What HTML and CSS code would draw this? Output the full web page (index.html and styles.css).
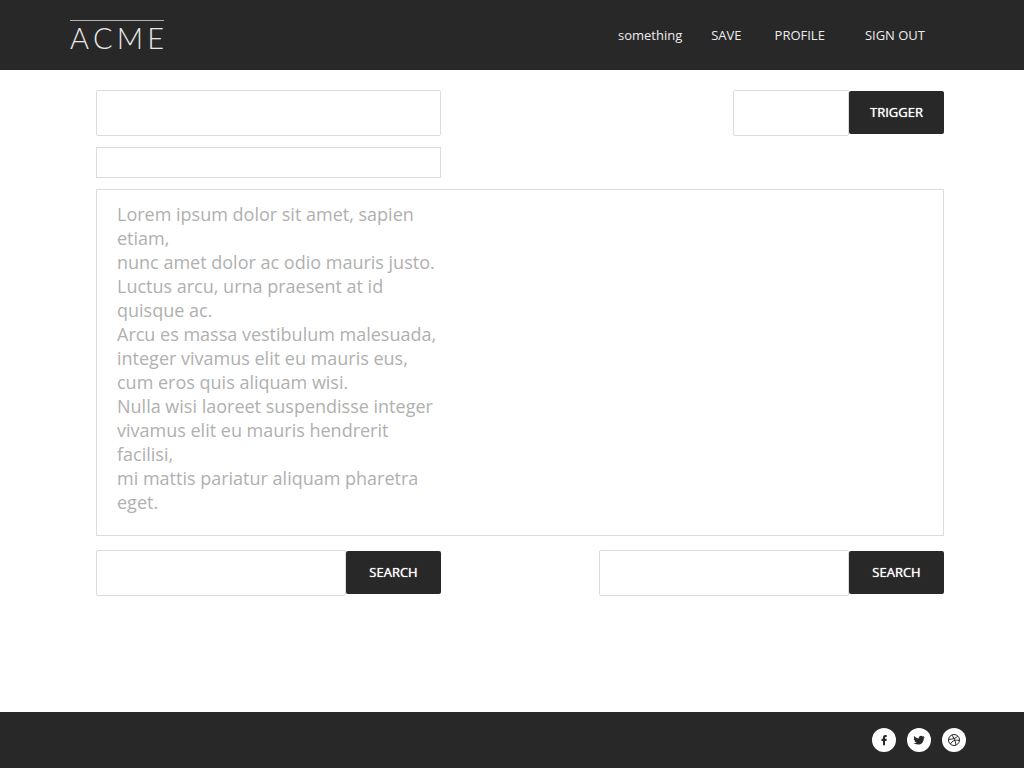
FILE: index.html
```html
<!DOCTYPE html>
<html lang="en">
<head>
<meta charset="utf-8">
<meta name="viewport" content="width=device-width, initial-scale=1">
<title>Acme</title>
<link rel="stylesheet" href="styles.css">
</head>
<body>
<header class="header">
  <a class="logo" href="#" aria-label="ACME"><span>A</span><span>C</span><span>M</span><span>E</span></a>
  <nav class="nav">
    <a class="nav-user" href="#">something</a>
    <a class="nav-save" href="#">SAVE</a>
    <a class="nav-profile" href="#">PROFILE</a>
    <a href="#">SIGN OUT</a>
  </nav>
</header>
<main class="main">
  <div class="row">
    <input class="field column" type="text" aria-label="Title">
    <form class="group group-small">
      <input class="field" type="text" aria-label="Trigger value">
      <button class="button" type="button">TRIGGER</button>
    </form>
  </div>
  <input class="field field-slim column" type="text" aria-label="Subtitle">
  <div class="editor">
    <textarea class="editor-text" rows="13" aria-label="Text" spellcheck="false">Lorem ipsum dolor sit amet, sapien etiam,
nunc amet dolor ac odio mauris justo.
Luctus arcu, urna praesent at id quisque ac.
Arcu es massa vestibulum malesuada,
integer vivamus elit eu mauris eus,
cum eros quis aliquam wisi.
Nulla wisi laoreet suspendisse integer
vivamus elit eu mauris hendrerit facilisi,
mi mattis pariatur aliquam pharetra eget.</textarea>
  </div>
  <div class="row">
    <form class="group column">
      <input class="field" type="text" aria-label="First search">
      <button class="button" type="button">SEARCH</button>
    </form>
    <form class="group column">
      <input class="field" type="text" aria-label="Second search">
      <button class="button" type="button">SEARCH</button>
    </form>
  </div>
</main>
<footer class="footer">
  <a class="social" href="#" aria-label="Facebook">
    <svg viewBox="0 0 24 24"><path d="M11 17.200v-4.300H9.500v-2.100H11V9.600c0-1.900.9-2.600 2.300-2.600h1.400v2.100h-.9c-.6 0-.8.200-.8.700v1h1.700l-.2 2.100H13v4.300z"/></svg>
  </a>
  <a class="social" href="#" aria-label="Twitter">
    <svg viewBox="0 0 24 24"><path d="M7.300 8c1.200 1.400 2.600 2.300 4.400 2.500.1-1.700.9-2.700 2.400-2.800.7 0 1.200.3 1.600.7l1.300-.4-.5 1.200 1.500.2-1.300 1c.1 3.700-2.500 6.100-5.600 6.100-1.800 0-3.500-.5-4.600-1.400 1.400 0 2.400-.2 3.100-.8-1-.1-1.600-.6-2-1.400h.8c-1.100-.4-1.600-1.100-1.600-2.100l.7.100C6.700 10.200 6.700 9 7.300 8z"/></svg>
  </a>
  <a class="social social-line" href="#" aria-label="Dribbble">
    <svg viewBox="0 0 24 24"><circle cx="12" cy="12" r="5.500"/><path d="M9.800 7c2 2.500 3.500 5.600 4.200 10M6.500 11.300c4 0 7.300-.8 9.200-3.200M8.400 16.100c1.900-3.500 5.100-4.700 9.100-3.600"/></svg>
  </a>
</footer>
</body>
</html>
```
FILE: styles.css
```css
* {
  box-sizing: border-box;
}

body {
  display: flex;
  flex-direction: column;
  min-height: 100vh;
  margin: 0;
  background: #fff;
  color: #282828;
  font-family: "Open Sans", sans-serif;
  font-size: 13px;
}

.header {
  display: flex;
  justify-content: space-between;
  align-items: flex-start;
  height: 70px;
  padding: 20px 99px 0 70px;
  background: #282828;
}

.logo {
  display: flex;
  justify-content: space-between;
  width: 94px;
  border-top: 1px solid #b0b0b0;
  color: #e8e8e8;
  font-family: Lato, sans-serif;
  font-size: 29px;
  font-weight: 300;
  line-height: 34px;
  text-decoration: none;
}

.nav {
  display: flex;
  line-height: 30px;
}

.nav a {
  color: #ececec;
  text-decoration: none;
}

.nav-user {
  margin-right: 29px;
}

.nav-save {
  margin-right: 33px;
}

.nav-profile {
  margin-right: 40px;
}

.main {
  display: flex;
  flex: 1;
  flex-direction: column;
  padding: 20px 80px 20px 96px;
}

.row {
  display: flex;
  justify-content: space-between;
  gap: 16px;
}

.column {
  width: 345px;
  max-width: 100%;
}

.field {
  min-width: 0;
  height: 46px;
  padding: 0 16px;
  border: 1px solid #dcdcdc;
  border-radius: 2px;
  background: #fff;
  color: inherit;
  font: inherit;
}

.field-slim {
  height: 31px;
  margin: 11px 0;
  border-radius: 0;
}

.group {
  display: flex;
  align-items: flex-start;
}

.group-small {
  width: 211px;
}

.group .field {
  flex: 1;
}

.button {
  width: 95px;
  height: 43px;
  margin-top: 1px;
  padding: 0 0 2px;
  border: 0;
  border-radius: 2px;
  background: #282828;
  color: #fff;
  font: inherit;
  text-shadow: 0 0 1px #fff;
}

.editor {
  margin-bottom: 14px;
  padding: 12px 0 21px 20px;
  border: 1px solid #dcdcdc;
  background: #fff;
}

.editor-text {
  display: block;
  width: 324px;
  max-width: 100%;
  padding: 0;
  border: 0;
  overflow: hidden;
  resize: none;
  background: transparent;
  color: #b0b0b0;
  font: inherit;
  font-size: 18px;
  line-height: 24px;
}

.footer {
  display: flex;
  justify-content: flex-end;
  gap: 11px;
  padding: 16px 58px;
  background: #282828;
}

.social {
  display: block;
  width: 24px;
  height: 24px;
  border-radius: 50%;
  background: #fff;
}

.social svg {
  display: block;
  fill: #282828;
}

.social-line svg {
  fill: none;
  stroke: #282828;
}
```
